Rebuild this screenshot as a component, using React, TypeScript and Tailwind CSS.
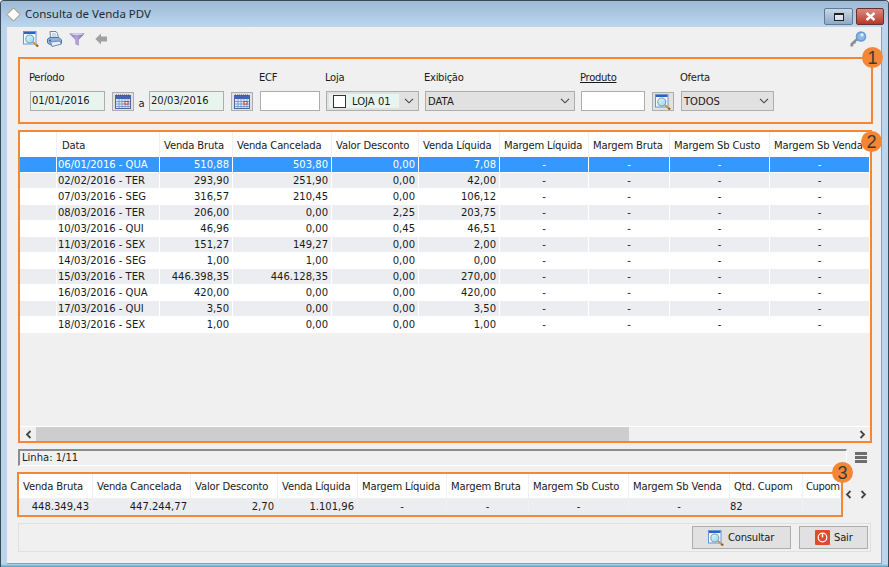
import React from "react";

const font = { fontFamily: '"DejaVu Sans", sans-serif' };

function SearchIcon({ size = 16 }: { size?: number }) {
  return (
    <svg width={size} height={size} viewBox="0 0 16 16" className="shrink-0">
      <defs>
        <linearGradient id="lens" x1="0" y1="0" x2="1" y2="1">
          <stop offset="0" stopColor="#e6f8fd" />
          <stop offset="1" stopColor="#8fd3ec" />
        </linearGradient>
      </defs>
      <rect x="0.5" y="0.5" width="12.5" height="12.5" fill="#f4f8fd" stroke="#6a94d0" />
      <rect x="1" y="1" width="11.5" height="2" fill="#2a63c8" />
      <circle cx="6.8" cy="8" r="4" fill="url(#lens)" stroke="#7f9db8" strokeWidth="1.1" />
      <path d="M10 11 L15 15.4" stroke="#c8964a" strokeWidth="2" />
      <path d="M13.5 14 L15 15.4" stroke="#8a6228" strokeWidth="2" />
    </svg>
  );
}

function PrinterIcon() {
  return (
    <svg width="15" height="16" viewBox="0 0 15 16">
      <path d="M3 0.5 H9 L10.5 2.5 L11.5 7 H3.5 Z" fill="#eef3fa" stroke="#6f88ac" />
      <path d="M5 3 H9 M5 5 H9.5" stroke="#9db0ca" strokeWidth="0.8" />
      <path d="M0.5 8 L3 6.5 H12 L14.5 9 V12.5 L4 14 L0.5 12 Z" fill="#8fb2de" stroke="#4f74a6" />
      <path d="M3.5 11 L12.5 10 L14.5 13 L5 15.5 Z" fill="#e9eff7" stroke="#6f88ac" />
      <circle cx="3" cy="9.5" r="0.9" fill="#2f5b92" />
    </svg>
  );
}

function FunnelIcon() {
  return (
    <svg width="16" height="13" viewBox="0 0 16 13">
      <defs>
        <linearGradient id="fun" x1="0" y1="0" x2="1" y2="0">
          <stop offset="0" stopColor="#7f68ae" />
          <stop offset="0.45" stopColor="#b9a4d8" />
          <stop offset="1" stopColor="#7a62a6" />
        </linearGradient>
      </defs>
      <path d="M0.3 0.5 H15.7 L9.8 6.8 V12.7 L6.2 11.2 V6.8 Z" fill="url(#fun)" />
      <ellipse cx="8" cy="1.3" rx="6.5" ry="0.8" fill="#d8cfe8" />
    </svg>
  );
}

function BackArrow() {
  return (
    <svg width="12" height="12" viewBox="0 0 12 12">
      <path d="M6 0.5 V3.5 H12 V8.5 H6 V11.5 L0.3 6 Z" fill="#a0a0a0" />
    </svg>
  );
}

function KeyIcon() {
  return (
    <svg width="17" height="16" viewBox="0 0 17 16">
      <path d="M0.5 15.5 L0.5 12.5 L6.8 6.8 L9 9 L6 10.5 L5.5 12.5 L3.5 13 L3 15.5 Z" fill="#8e8e8e" />
      <circle cx="11" cy="5.5" r="5.3" fill="#6b9cd6" />
      <circle cx="11" cy="5.5" r="3.6" fill="#8fb8e6" />
      <circle cx="12" cy="3.8" r="1.6" fill="#e2eefa" />
    </svg>
  );
}

function CalendarIcon() {
  return (
    <svg width="16" height="15" viewBox="0 0 16 15">
      <rect x="0.5" y="1.5" width="15" height="13" fill="#dfe8f8" stroke="#4a68a4" />
      <rect x="1" y="2" width="14" height="3" fill="#3f66ae" />
      <path d="M1.5 0.5 V2 M3.5 0.5 V2 M5.5 0.5 V2 M7.5 0.5 V2 M9.5 0.5 V2 M11.5 0.5 V2 M13.5 0.5 V2" stroke="#555" strokeWidth="0.9" />
      <path d="M1 7.5 H15 M1 10 H15 M1 12.5 H15 M4 5 V14 M7 5 V14 M10 5 V14 M13 5 V14" stroke="#6f8ec8" strokeWidth="0.8" />
      <rect x="10" y="7.5" width="3" height="2.6" fill="#f8efe8" stroke="#e03a24" />
    </svg>
  );
}

function PowerIcon() {
  return (
    <svg width="15" height="15" viewBox="0 0 15 15" className="shrink-0">
      <rect x="0" y="0" width="15" height="15" rx="1" fill="#e3492e" />
      <circle cx="7.5" cy="7.5" r="4.3" fill="none" stroke="#fff" strokeWidth="1.2" />
      <path d="M7.5 3 V7.5" stroke="#fff" strokeWidth="1.5" />
    </svg>
  );
}

function Chevron() {
  return (
    <svg width="10" height="6" viewBox="0 0 10 6">
      <path d="M1 0.8 L5 4.8 L9 0.8" fill="none" stroke="#444" strokeWidth="1.1" />
    </svg>
  );
}

function ScrollArrow({ dir }: { dir: "l" | "r" }) {
  return (
    <svg width="7" height="9" viewBox="0 0 7 9">
      <path d={dir === "l" ? "M5.5 1 L2 4.5 L5.5 8" : "M1.5 1 L5 4.5 L1.5 8"} fill="none" stroke="#444" strokeWidth="1.8" />
    </svg>
  );
}

function Badge({ n, className }: { n: string; className: string }) {
  return (
    <div
      style={{ fontFamily: '"Liberation Sans", sans-serif' }}
      className={"absolute w-[21px] h-[21px] rounded-full bg-[#f58634] flex items-center justify-center text-[18px] leading-none text-[#3a3a3a] " + className}
    >
      {n}
    </div>
  );
}

function Label({ children, className = "" }: { children: React.ReactNode; className?: string }) {
  return <div className={"h-[14px] leading-[14px] mb-[6px] -ml-[1px] tracking-[-0.3px] " + className}>{children}</div>;
}

function IconBtn({ children }: { children: React.ReactNode }) {
  return (
    <div className="w-[22px] h-[19px] mt-[1px] bg-[#e1e1e1] border border-[#adadad] flex items-center justify-center">
      {children}
    </div>
  );
}

const cols = [
  { t: "Data", w: 103, left: true },
  { t: "Venda Bruta", w: 73 },
  { t: "Venda Cancelada", w: 99 },
  { t: "Valor Desconto", w: 87 },
  { t: "Venda Líquida", w: 81 },
  { t: "Margem Líquida", w: 89 },
  { t: "Margem Bruta", w: 81 },
  { t: "Margem Sb Custo", w: 100 },
  { t: "Margem Sb Venda", w: 100 },
];

const rows = [
  ["06/01/2016 - QUA", "510,88", "503,80", "0,00", "7,08"],
  ["02/02/2016 - TER", "293,90", "251,90", "0,00", "42,00"],
  ["07/03/2016 - SEG", "316,57", "210,45", "0,00", "106,12"],
  ["08/03/2016 - TER", "206,00", "0,00", "2,25", "203,75"],
  ["10/03/2016 - QUI", "46,96", "0,00", "0,45", "46,51"],
  ["11/03/2016 - SEX", "151,27", "149,27", "0,00", "2,00"],
  ["14/03/2016 - SEG", "1,00", "1,00", "0,00", "0,00"],
  ["15/03/2016 - TER", "446.398,35", "446.128,35", "0,00", "270,00"],
  ["16/03/2016 - QUA", "420,00", "0,00", "0,00", "420,00"],
  ["17/03/2016 - QUI", "3,50", "0,00", "0,00", "3,50"],
  ["18/03/2016 - SEX", "1,00", "0,00", "0,00", "1,00"],
];

const totalCols = [
  { t: "Venda Bruta", w: 74, v: "448.349,43", a: "r" },
  { t: "Venda Cancelada", w: 98, v: "447.244,77", a: "r" },
  { t: "Valor Desconto", w: 87, v: "2,70", a: "r" },
  { t: "Venda Líquida", w: 80, v: "1.101,96", a: "r" },
  { t: "Margem Líquida", w: 89, v: "-", a: "c" },
  { t: "Margem Bruta", w: 82, v: "-", a: "c" },
  { t: "Margem Sb Custo", w: 100, v: "-", a: "c" },
  { t: "Margem Sb Venda", w: 101, v: "-", a: "c" },
  { t: "Qtd. Cupom", w: 73, v: "82", a: "l" },
  { t: "Cupom", w: 38, v: "", a: "c" },
];

export default function App() {
  return (
    <div style={font} className="relative w-[889px] h-[567px] overflow-hidden text-[10px] text-[#1a1a1a] bg-[#bcd4ec] rounded-t-[4px] border-t border-l border-r border-[#3a4a58] flex flex-col">
      {/* title bar */}
      <div className="h-[26px] shrink-0 bg-gradient-to-b from-[#9db9d6] to-[#bcd6ee] flex items-center pl-[5px] pr-[4px]">
        <svg width="15" height="15" viewBox="0 0 15 15" className="shrink-0">
          <path d="M7.5 1 L14 7.5 L7.5 14 L1 7.5 Z" fill="#fff" stroke="#a08a60" />
        </svg>
        <div style={{ fontFamily: '"Noto Sans", sans-serif' }} className="ml-[4px] text-[11.5px] text-[#1f2a35]">Consulta de Venda PDV</div>
        <div className="ml-auto flex gap-[3px] mt-[5px]">
          <div className="w-[29px] h-[17px] rounded-[2px] border border-[#5f7a96] bg-gradient-to-b from-[#c8d8e8] to-[#8ea9c6] flex items-center justify-center">
            <div className="w-[10px] h-[8px] border border-[#222] border-t-2 bg-white/60" />
          </div>
          <div className="w-[28px] h-[17px] rounded-[2px] border border-[#6a3030] bg-gradient-to-b from-[#d88a80] to-[#b8342a] flex items-center justify-center">
            <svg width="11" height="9" viewBox="0 0 11 9">
              <path d="M1.5 1 L9.5 8 M9.5 1 L1.5 8" stroke="#fff" strokeWidth="2.4" />
            </svg>
          </div>
        </div>
      </div>

      {/* client */}
      <div className="ml-[6px] mr-[6px] h-[537px] shrink-0 bg-[#f0f0f0] border-r border-b border-[#8aa0b8] flex flex-col px-[11px]">
        {/* toolbar */}
        <div className="h-[30px] shrink-0 flex items-start pl-[5px] pt-[4px]">
          <SearchIcon />
          <div className="ml-[8px]"><PrinterIcon /></div>
          <div className="ml-[7px] mt-[2px]"><FunnelIcon /></div>
          <div className="ml-[10px] mt-[2px]"><BackArrow /></div>
          <div className="ml-auto mr-[3px]"><KeyIcon /></div>
        </div>

        {/* Panel 1 */}
        <div className="relative h-[67px] w-[855px] shrink-0 border-2 border-[#f58634] flex items-start pl-[10px] pt-[12px]">
          <div>
            <Label>Período</Label>
            <div className="flex items-start">
              <div className="w-[75px] h-[20px] bg-[#e8f5ef] border border-[#adadad] pl-[1px] leading-[18px]">01/01/2016</div>
              <div className="ml-[7px]"><IconBtn><CalendarIcon /></IconBtn></div>
              <div className="w-[15px] text-center pt-[5px]">a</div>
              <div className="w-[75px] h-[20px] bg-[#e8f5ef] border border-[#adadad] pl-[1px] leading-[18px]">20/03/2016</div>
              <div className="ml-[7px]"><IconBtn><CalendarIcon /></IconBtn></div>
            </div>
          </div>
          <div className="ml-[7px]">
            <Label>ECF</Label>
            <div className="w-[60px] h-[20px] bg-white border border-[#adadad]" />
          </div>
          <div className="ml-[6px]">
            <Label>Loja</Label>
            <div className="w-[93px] h-[20px] bg-[#e1e1e1] border border-[#adadad] flex items-center pl-[2px]">
              <div className="w-[70px] h-[14px] bg-[#e8f5ef] flex items-center pl-[4px]">
                <div className="w-[13px] h-[13px] bg-white border border-[#333] shrink-0" />
                <span className="ml-[6px]">LOJA 01</span>
              </div>
              <div className="ml-auto mr-[4px] flex"><Chevron /></div>
            </div>
          </div>
          <div className="ml-[6px]">
            <Label>Exibição</Label>
            <div className="w-[150px] h-[20px] bg-[#e1e1e1] border border-[#adadad] flex items-center pl-[2px]">
              <span>DATA</span>
              <div className="ml-auto mr-[4px] flex"><Chevron /></div>
            </div>
          </div>
          <div className="ml-[6px]">
            <Label className="underline">Produto</Label>
            <div className="flex items-start">
              <div className="w-[64px] h-[20px] bg-white border border-[#adadad]" />
              <div className="ml-[7px]"><IconBtn><SearchIcon /></IconBtn></div>
            </div>
          </div>
          <div className="ml-[7px]">
            <Label>Oferta</Label>
            <div className="w-[93px] h-[20px] bg-[#e1e1e1] border border-[#adadad] flex items-center pl-[2px]">
              <span>TODOS</span>
              <div className="ml-auto mr-[4px] flex"><Chevron /></div>
            </div>
          </div>
          <Badge n="1" className="-right-[12px] -top-[12px]" />
        </div>

        {/* Panel 2 */}
        <div className="relative mt-[6px] h-[313px] w-[854px] shrink-0 border-2 border-[#f58634] flex flex-col">
          <div className="flex h-[25px] shrink-0 bg-[#f0f0f0] gap-[1px] tracking-[-0.15px]">
            <div className="w-[36px] bg-white" />
            {cols.map((c) => (
              <div key={c.t} style={{ width: c.w - 1 }} className={"bg-white shrink-0 whitespace-nowrap flex items-center pt-[1px] overflow-hidden " + (c.left ? "pl-[5px]" : "pl-[4px]")}>
                {c.t}
              </div>
            ))}
          </div>
          <div className="flex flex-col">
            {rows.map((r, i) => {
              const sel = i === 0;
              const bg = sel ? "bg-[#3399ff] text-white" : i % 2 === 1 ? "bg-[#ecedf0]" : "bg-white";
              return (
                <div key={r[0]} className="flex h-[16px] shrink-0 gap-[1px] leading-[16px] bg-white">
                  <div className={"w-[36px] h-[15px] " + bg} />
                  {cols.map((c, j) => {
                    const v = j < 5 ? r[j] : "-";
                    return (
                      <div key={c.t} style={{ width: c.w - 1 }} className={"h-[15px] shrink-0 whitespace-nowrap overflow-hidden " + bg + " " + (j === 0 ? "pl-[1px]" : j < 5 ? "text-right pr-[3px]" : "text-center")}>
                        {v}
                      </div>
                    );
                  })}
                </div>
              );
            })}
          </div>
          <div className="mt-auto h-[15px] bg-[#f0f0f0] border-t border-white flex items-center shrink-0">
            <div className="w-[16px] flex justify-center"><ScrollArrow dir="l" /></div>
            <div className="w-[593px] h-full bg-[#cdcdcd]" />
            <div className="ml-auto w-[16px] flex justify-center"><ScrollArrow dir="r" /></div>
          </div>
          <Badge n="2" className="-right-[12px] -top-[1px]" />
        </div>

        {/* status */}
        <div className="mt-[6px] flex shrink-0 items-center">
          <div className="w-[829px] h-[17px] bg-[#f0f0f0] border-t-2 border-l-2 border-[#8c8c8c] border-b border-b-white border-r border-r-white pl-[2px] leading-[14px]">Linha: 1/11</div>
          <div className="ml-[8px] flex flex-col gap-[1px]">
            <div className="w-[12px] h-[3px] bg-[#6d6d6d]" />
            <div className="w-[12px] h-[3px] bg-[#6d6d6d]" />
            <div className="w-[12px] h-[3px] bg-[#6d6d6d]" />
          </div>
        </div>

        {/* Panel 3 */}
        <div className="mt-[6px] -ml-[1px] flex items-center shrink-0">
          <div className="relative w-[826px] h-[45px] border-2 border-[#f58634] flex flex-col shrink-0">
            <div className="flex h-[24px] gap-[1px] shrink-0 tracking-[-0.15px]">
              {totalCols.map((c) => (
                <div key={c.t} style={{ width: c.w - 1 }} className={"bg-white shrink-0 whitespace-nowrap overflow-hidden flex items-center " + (c.t === "Cupom" ? "pl-[3px] tracking-[-0.4px]" : "pl-[4px]")}>{c.t}</div>
              ))}
            </div>
            <div className="flex h-[16px] gap-[1px] mt-[1px] shrink-0">
              {totalCols.map((c) => (
                <div key={c.t} style={{ width: c.w - 1 }} className={"bg-[#ecedf0] shrink-0 leading-[15px] whitespace-nowrap " + (c.a === "r" ? "text-right pr-[3px]" : c.a === "c" ? "text-center" : "text-left")}>{c.v}</div>
              ))}
            </div>
            <Badge n="3" className="-right-[12px] -top-[12px]" />
          </div>
          <div className="ml-[2px] flex gap-[8px] items-center">
            <ScrollArrow dir="l" />
            <ScrollArrow dir="r" />
          </div>
        </div>

        {/* footer */}
        <div className="mt-[6px] h-[29px] w-[853px] shrink-0 border border-[#e0e0e0] flex items-center justify-end pr-[2px] gap-[8px] tracking-[-0.2px]">
          <div className="w-[99px] h-[23px] bg-[#e1e1e1] border border-[#adadad] flex items-center pl-[15px] gap-[4px]">
            <SearchIcon />
            <span>Consultar</span>
          </div>
          <div className="w-[69px] h-[23px] bg-[#e1e1e1] border border-[#adadad] flex items-center pl-[15px] gap-[4px]">
            <PowerIcon />
            <span>Sair</span>
          </div>
        </div>
      </div>
      <div className="h-[3px] bg-gradient-to-b from-[#bcd4ec] to-[#4aa0c0]" />
    </div>
  );
}
